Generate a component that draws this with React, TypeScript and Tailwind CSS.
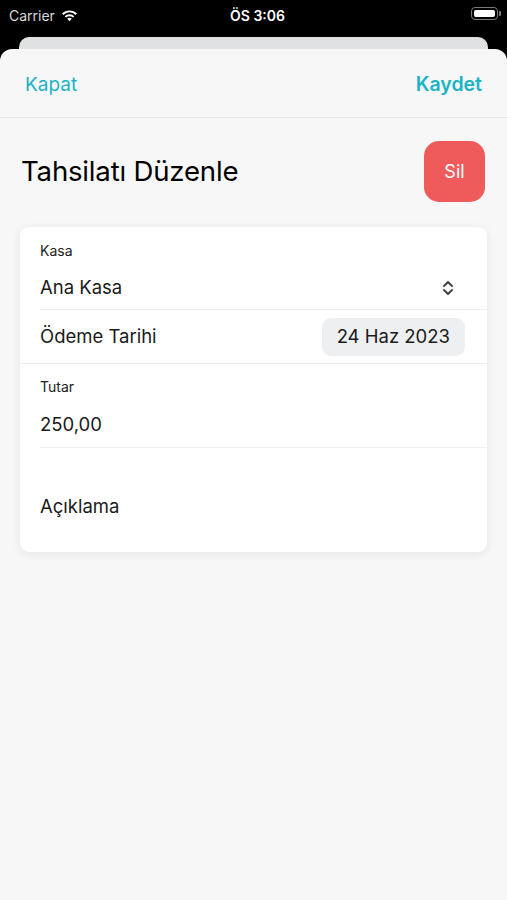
import React from "react";

export default function App() {
  return (
    <div className="w-[507px] h-[900px] bg-black flex flex-col overflow-hidden" style={{ fontFamily: "Inter, 'Noto Sans', sans-serif" }}>
      {/* Status bar */}
      <div className="h-[37px] shrink-0 relative flex items-start px-[9px] pt-[5px] text-white">
        <div className="flex items-center gap-[6px]">
          <span className="text-[14px] text-[#d8d8d8]">Carrier</span>
          <svg width="17" height="13" viewBox="0 0 17 13">
            <path d="M8.5 12.2 L6.2 9.7 A3.4 3.4 0 0 1 10.8 9.7 Z" fill="#fff" />
            <path d="M3.7 7.2 A6.8 6.8 0 0 1 13.3 7.2 L11.9 8.6 A4.8 4.8 0 0 0 5.1 8.6 Z" fill="#fff" />
            <path d="M1 4.5 A10.6 10.6 0 0 1 16 4.5 L14.6 5.9 A8.6 8.6 0 0 0 2.4 5.9 Z" fill="#fff" />
          </svg>
        </div>
        <div className="absolute left-[8px] right-0 top-[5px] flex justify-center">
          <span className="text-[14px] font-semibold text-white">ÖS 3:06</span>
        </div>
        <div className="absolute right-[6px] top-[7px] flex items-center">
          <div className="w-[27px] h-[13px] rounded-[4px] border border-[#7a7a7a] p-[2px]">
            <div className="w-full h-full bg-white rounded-[2px]" />
          </div>
          <div className="w-[2px] h-[5px] bg-[#7a7a7a] rounded-r-[1px] ml-[1px]" />
        </div>
      </div>
      {/* back sheet */}
      <div className="mx-[19px] h-[12px] shrink-0 bg-[#e0e1e2] rounded-t-[10px]" />
      {/* front sheet */}
      <div className="flex-1 bg-[#f7f7f7] rounded-t-[12px] flex flex-col">
        <div className="h-[69px] flex items-center justify-between px-[25px] pt-[4px] border-b border-[#e6e6e6]">
          <span className="text-[19px] text-[#1cb3c8]">Kapat</span>
          <span className="text-[19.5px] font-semibold text-[#1cb3c8]">Kaydet</span>
        </div>
        <div className="flex items-center justify-between pl-[21px] pr-[22px] pt-[23px]">
          <span className="text-[27.6px] text-black tracking-[-0.2px]">Tahsilatı Düzenle</span>
          <div className="w-[61px] h-[61px] rounded-[15px] bg-[#ef5b5b] flex items-center justify-center">
            <span className="text-[18px] text-white">Sil</span>
          </div>
        </div>
        <div className="mx-[20px] mt-[25px] bg-white rounded-[9px] shadow-[0_2px_10px_rgba(0,0,0,0.08)] overflow-hidden">
          {/* Kasa */}
          <div className="pl-[20px]">
            <div className="pt-[13px] text-[14px] text-[#222]">Kasa</div>
            <div className="flex items-center justify-between h-[49px] pt-[6px] pr-[33px] border-b border-[#efefef]">
              <span className="text-[18.5px] text-[#1a1a1a]">Ana Kasa</span>
              <svg width="12" height="16" viewBox="0 0 12 16" fill="none" stroke="#444" strokeWidth="2" strokeLinecap="round" strokeLinejoin="round">
                <path d="M2 6 L6 2 L10 6" />
                <path d="M2 10 L6 14 L10 10" />
              </svg>
            </div>
          </div>
          {/* Ödeme Tarihi */}
          <div className="flex items-center justify-between h-[54px] pl-[20px] pr-[22px] border-b border-[#efefef]">
            <span className="text-[18.5px] text-[#1a1a1a]">Ödeme Tarihi</span>
            <div className="h-[38px] px-[15px] rounded-[9px] bg-[#eeeff0] flex items-center">
              <span className="text-[18.5px] text-[#1a1a1a]">24 Haz 2023</span>
            </div>
          </div>
          {/* Tutar */}
          <div className="pl-[20px]">
            <div className="pt-[12px] text-[14px] text-[#222]">Tutar</div>
            <div className="flex items-center h-[51px] pt-[5px] border-b border-[#efefef]">
              <span className="text-[18.5px] text-[#1a1a1a]">250,00</span>
            </div>
          </div>
          {/* Açıklama */}
          <div className="pl-[20px] h-[104px] flex items-center">
            <span className="text-[18.5px] text-[#1a1a1a] mt-[14px]">Açıklama</span>
          </div>
        </div>
      </div>
    </div>
  );
}
